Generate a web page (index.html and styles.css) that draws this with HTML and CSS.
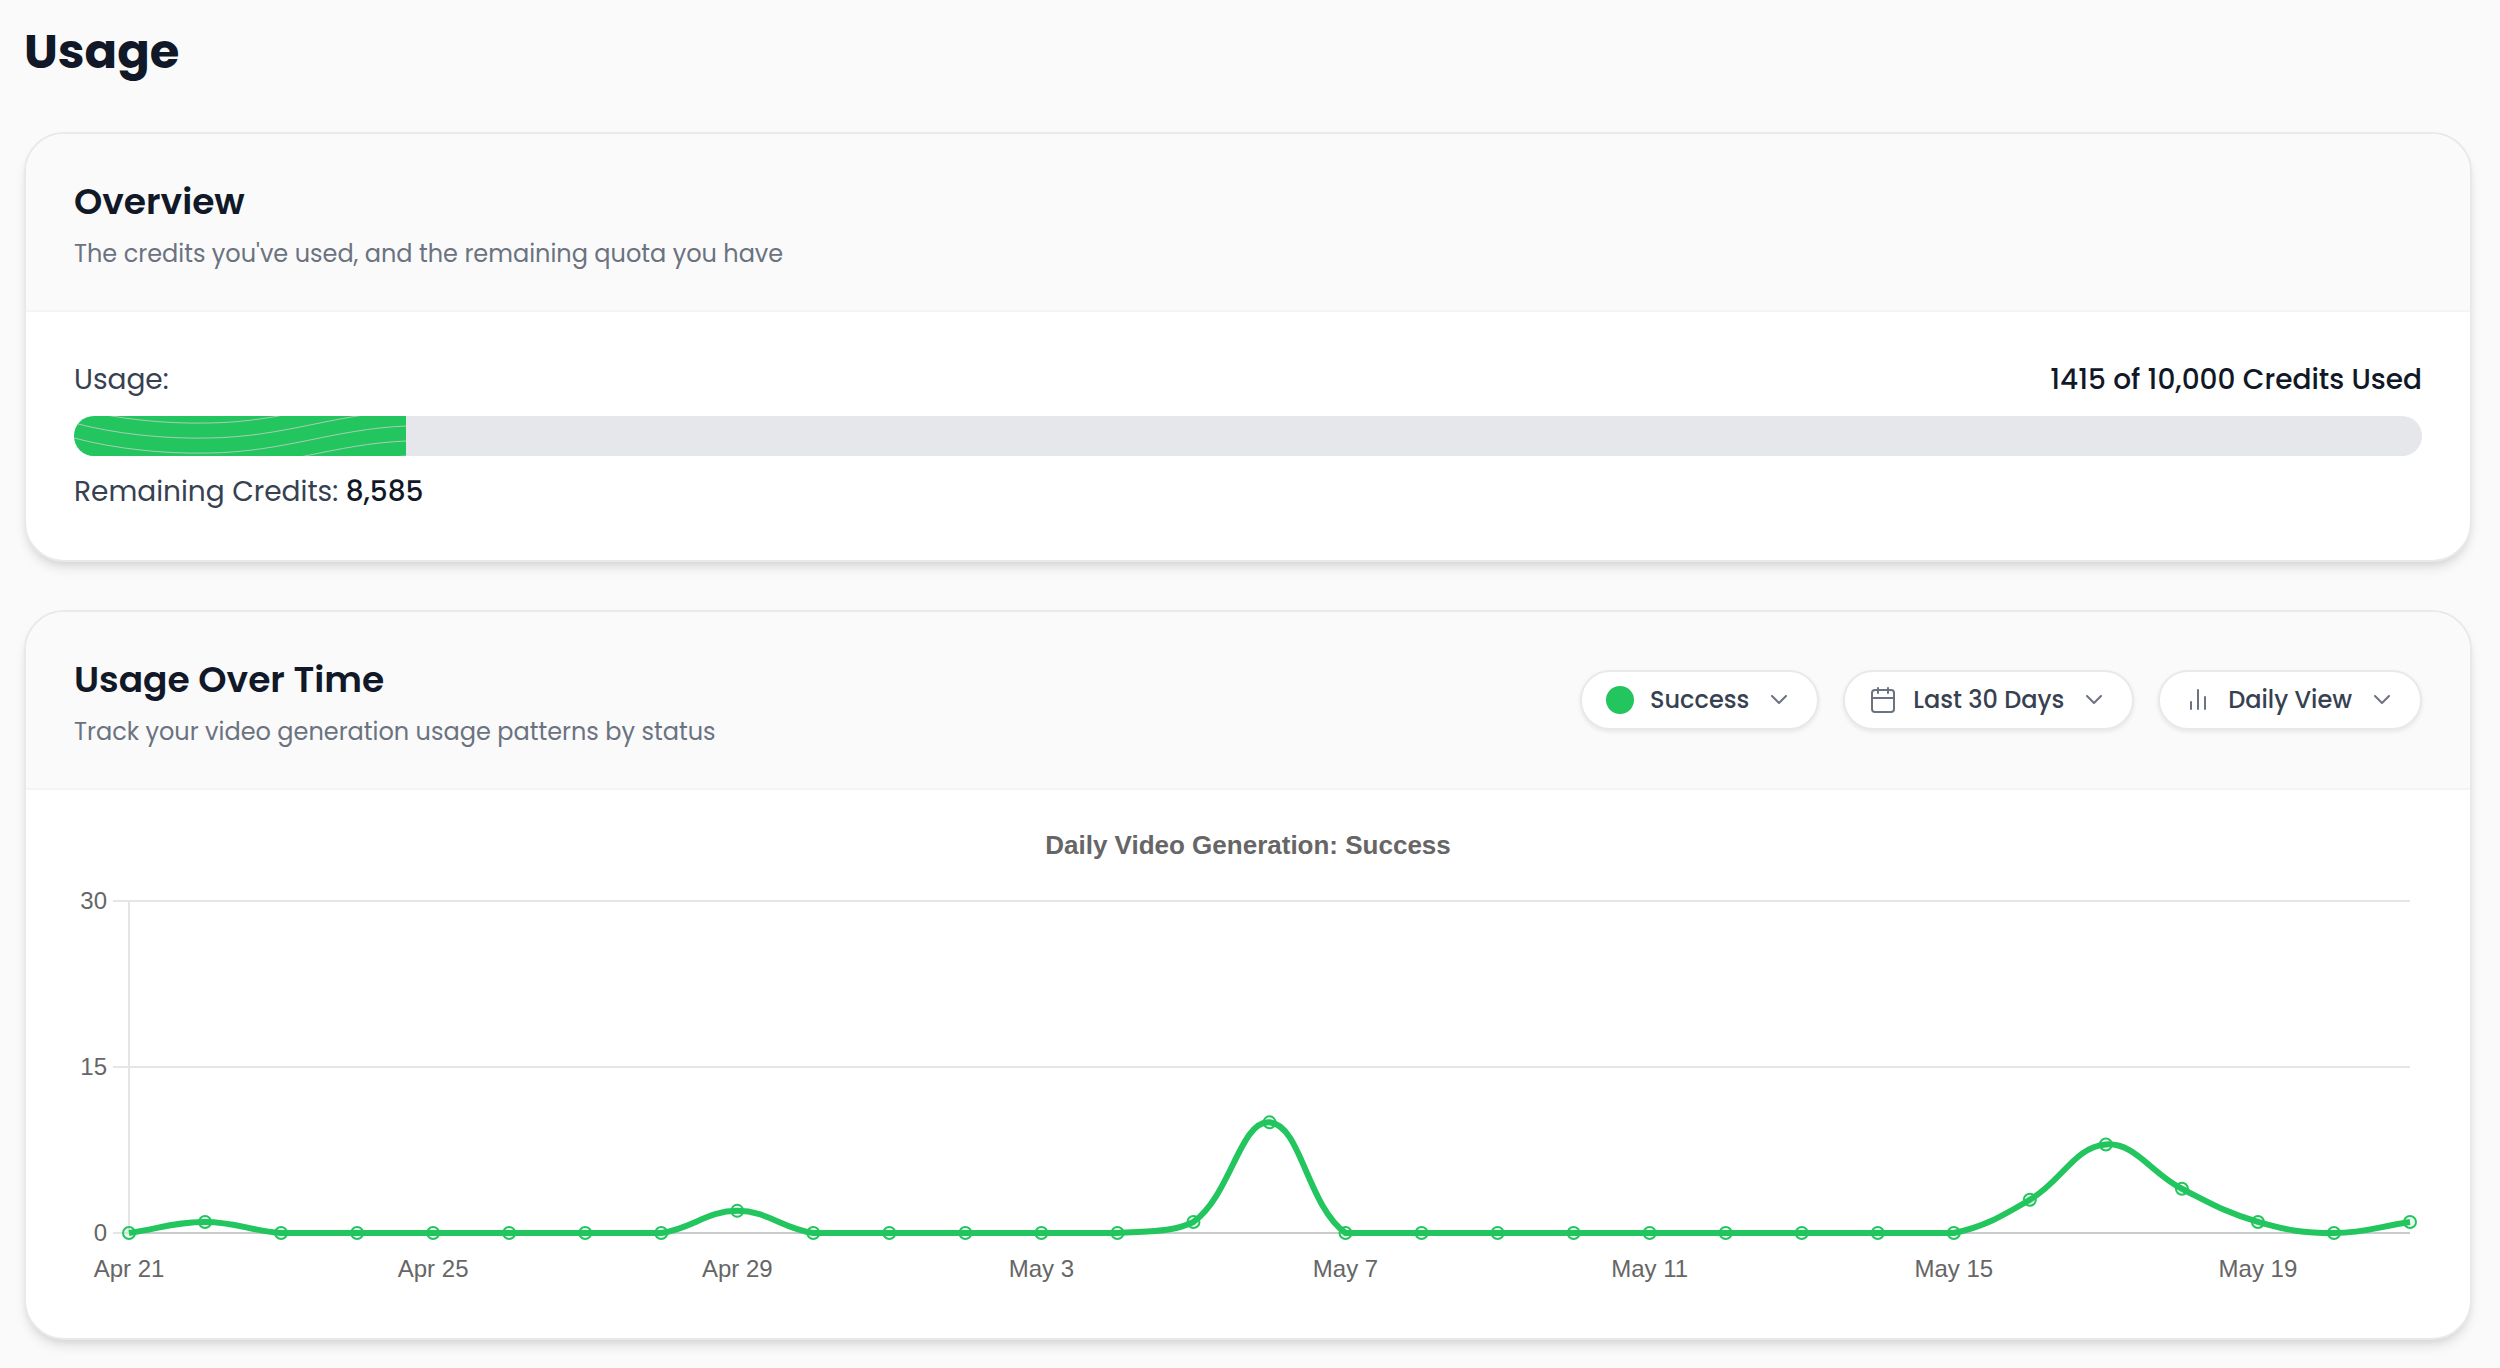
FILE: index.html
```html
<!DOCTYPE html>
<html lang="en">
  <head>
    <meta charset="utf-8">
    <title>Usage</title>
    <link rel="stylesheet" href="styles.css">
  </head>
  <body>
    <main class="page">
      <h1>Usage</h1>

      <section class="card">
        <header class="card-header">
          <div>
            <h2>Overview</h2>
            <p class="subtitle">The credits you've used, and the remaining quota you have</p>
          </div>
        </header>
        <div class="card-body">
          <div class="usage-row">
            <span>Usage:</span>
            <strong>1415 of 10,000 Credits Used</strong>
          </div>
          <div class="usage-bar">
            <div class="usage-bar-inner" style="width: 14.15%">
              <svg class="waves" width="332" height="40" aria-hidden="true">
                <path d="M0 -23C42 -12 90 -7 135 -8C210 -9 260 -32 332 -35" />
                <path d="M0 -8C42 3 90 8 135 7C210 6 260 -17 332 -20" />
                <path d="M0 7C42 18 90 23 135 22C210 21 260 -2 332 -5" />
                <path d="M0 22C42 33 90 38 135 37C210 36 260 13 332 10" />
                <path d="M0 37C42 48 90 53 135 52C210 51 260 28 332 25" />
                <path d="M0 52C42 63 90 68 135 67C210 66 260 43 332 40" />
              </svg>
            </div>
          </div>
          <p class="remaining">Remaining Credits: <strong>8,585</strong></p>
        </div>
      </section>

      <section class="card">
        <header class="card-header">
          <div>
            <h2>Usage Over Time</h2>
            <p class="subtitle">Track your video generation usage patterns by status</p>
          </div>
          <div class="filters">
            <label class="filter">
              <span class="status-dot"></span>
              <select aria-label="Status">
                <option>Success</option>
                <option>Failed</option>
              </select>
              <svg class="chevron" viewBox="0 0 16 10" aria-hidden="true"><path d="M1 1l7 7 7-7" /></svg>
            </label>
            <label class="filter">
              <svg class="icon" viewBox="0 0 28 28" aria-hidden="true">
                <rect x="3" y="4" width="22" height="22" rx="3" />
                <path d="M3 12h22M9 2v5M19 2v5" />
              </svg>
              <select aria-label="Date range">
                <option>Last 30 Days</option>
                <option>Last 7 Days</option>
              </select>
              <svg class="chevron" viewBox="0 0 16 10" aria-hidden="true"><path d="M1 1l7 7 7-7" /></svg>
            </label>
            <label class="filter">
              <svg class="icon" viewBox="0 0 28 28" aria-hidden="true">
                <path d="M7 16v7M14 4v19M21 11v12" />
              </svg>
              <select aria-label="View">
                <option>Daily View</option>
                <option>Weekly View</option>
              </select>
              <svg class="chevron" viewBox="0 0 16 10" aria-hidden="true"><path d="M1 1l7 7 7-7" /></svg>
            </label>
          </div>
        </header>
        <div class="chart-body">
          <svg id="chart" class="chart" role="img" aria-label="Daily Video Generation: Success"></svg>
        </div>
      </section>
    </main>

    <script src="chart.js"></script>
  </body>
</html>
```

FILE: styles.css
```css
* {
  box-sizing: border-box;
}
body {
  margin: 0;
  background-color: #fafafa;
  color: #111827;
  font-family: Poppins, Inter, sans-serif;
}
h1,
h2,
p {
  margin: 0;
}
.page {
  padding: 20px 28px 28px 24px;
}
h1 {
  margin-bottom: 48px;
  font-size: 48px;
  font-weight: 700;
  line-height: 64px;
}
h2 {
  margin-bottom: 16px;
  font-size: 36px;
  font-weight: 600;
  line-height: 40px;
}
strong {
  color: #111827;
  font-weight: 500;
}
.card {
  overflow: hidden;
  background-color: #fff;
  border: 2px solid #e8eaea;
  border-radius: 40px;
  box-shadow: 0 8px 12px -2px rgba(0, 0, 0, 0.1), 0 4px 8px -4px rgba(0, 0, 0, 0.1);
}
.card + .card {
  margin-top: 48px;
}
.card-header {
  display: flex;
  align-items: center;
  justify-content: space-between;
  padding: 48px 48px 40px;
  background-color: #fafafa;
  border-bottom: 2px solid #f3f4f6;
}
.subtitle {
  color: #6b7280;
  font-size: 24px;
  line-height: 32px;
}
.card-body {
  padding: 48px;
  color: #374151;
  font-size: 28px;
  line-height: 40px;
}

/* Usage bar */
.usage-row {
  display: flex;
  justify-content: space-between;
}
.usage-bar {
  height: 40px;
  margin: 16px 0;
  overflow: hidden;
  background-color: #e5e7eb;
  border-radius: 20px;
}
.usage-bar-inner {
  height: 100%;
  overflow: hidden;
  background-color: #22c55e;
}
.waves {
  display: block;
  fill: none;
  stroke: #a9cdb5;
  stroke-width: 1;
}

/* Filters */
.filters {
  display: flex;
  gap: 24px;
  margin-bottom: 8px;
}
.filter {
  display: flex;
  align-items: center;
  height: 60px;
  padding: 0 30px 0 24px;
  background-color: #fff;
  border: 2px solid #e8eaea;
  border-radius: 30px;
  box-shadow: 0 2px 4px rgba(0, 0, 0, 0.08);
}
.filter select {
  appearance: none;
  field-sizing: content;
  margin: 0 22px 0 16px;
  padding: 0;
  background: none;
  border: 0;
  color: #374151;
  font-family: inherit;
  font-size: 24px;
  font-weight: 500;
  line-height: 32px;
}
.status-dot {
  width: 28px;
  height: 28px;
  background-color: #22c55e;
  border-radius: 50%;
}
.icon {
  width: 28px;
  height: 28px;
  fill: none;
  stroke: #6b7280;
  stroke-width: 2;
  stroke-linecap: round;
}
.chevron {
  width: 16px;
  height: 10px;
  fill: none;
  stroke: #6b7280;
  stroke-width: 2;
  stroke-linecap: round;
  stroke-linejoin: round;
}

/* Chart */
.chart-body {
  padding: 24px 48px;
}
.chart {
  display: block;
  width: 100%;
  height: 500px;
  font-family: "Liberation Sans", Arial, sans-serif;
  font-size: 24px;
}
.chart text {
  fill: #666;
}
.chart-title {
  font-size: 26px;
  font-weight: bold;
}
.grid-line {
  stroke: #e5e5e5;
  stroke-width: 2;
}
.grid-line.zero {
  stroke: #c9cccc;
}
.series-line {
  fill: none;
  stroke: #22c55e;
  stroke-width: 6;
}
.series-point {
  fill: rgba(34, 197, 94, 0.1);
  stroke: #22c55e;
  stroke-width: 2;
}
```

FILE: chart.js
```js
const counts = [
  0, 1, 0, 0, 0, 0, 0, 0, 2, 0, 0, 0, 0, 0, 1, 10, 0, 0, 0, 0, 0, 0, 0, 0, 0, 3,
  8, 4, 1, 0, 1,
];
const labels = ["Apr 21", "Apr 25", "Apr 29", "May 3", "May 7", "May 11", "May 15", "May 19"];
const labelStep = 4;
const maxCount = 30;
const tension = 0.4;
const area = { left: 55, right: 12, top: 87, bottom: 419 };

const chart = document.getElementById("chart");

function add(name, attrs, text) {
  const el = document.createElementNS("http://www.w3.org/2000/svg", name);
  for (const key in attrs) {
    el.setAttribute(key, attrs[key]);
  }
  if (text !== undefined) {
    el.textContent = text;
  }
  chart.appendChild(el);
}

function clampY(y) {
  return Math.min(area.bottom, Math.max(area.top, y));
}

// Smooth curve through the points, control points kept inside the plot area
function curvePath(points) {
  const controls = points.map((p, i) => {
    const prev = points[i - 1] || p;
    const next = points[i + 1] || p;
    const d1 = Math.hypot(p.x - prev.x, p.y - prev.y);
    const d2 = Math.hypot(next.x - p.x, next.y - p.y);
    const a = (tension * d1) / (d1 + d2);
    const b = (tension * d2) / (d1 + d2);
    const dx = next.x - prev.x;
    const dy = next.y - prev.y;
    return {
      in: `${p.x - a * dx} ${clampY(p.y - a * dy)}`,
      out: `${p.x + b * dx} ${clampY(p.y + b * dy)}`,
    };
  });
  let d = `M${points[0].x} ${points[0].y}`;
  for (let i = 1; i < points.length; i++) {
    d += `C${controls[i - 1].out} ${controls[i].in} ${points[i].x} ${points[i].y}`;
  }
  return d;
}

function draw() {
  const width = chart.clientWidth;
  const right = width - area.right;
  const stepX = (right - area.left) / (counts.length - 1);
  const stepY = (area.bottom - area.top) / maxCount;

  chart.replaceChildren();
  add("text", { class: "chart-title", x: width / 2, y: 40, "text-anchor": "middle" }, "Daily Video Generation: Success");

  // y axis
  [30, 15, 0].forEach((value) => {
    const y = area.bottom - value * stepY;
    add("line", { class: "grid-line", x1: area.left - 16, x2: area.left, y1: y, y2: y });
    add("line", { class: value ? "grid-line" : "grid-line zero", x1: area.left, x2: right, y1: y, y2: y });
    add("text", { x: area.left - 22, y: y + 8, "text-anchor": "end" }, value);
  });
  add("line", { class: "grid-line", x1: area.left, x2: area.left, y1: area.top, y2: area.bottom });

  // x axis
  labels.forEach((label, i) => {
    add("text", { x: area.left + i * labelStep * stepX, y: 463, "text-anchor": "middle" }, label);
  });

  const points = counts.map((count, i) => ({
    x: area.left + i * stepX,
    y: area.bottom - count * stepY,
  }));
  add("path", { class: "series-line", d: curvePath(points) });
  points.forEach((p) => {
    add("circle", { class: "series-point", cx: p.x, cy: p.y, r: 6 });
  });
}

draw();
window.addEventListener("resize", draw);
```
